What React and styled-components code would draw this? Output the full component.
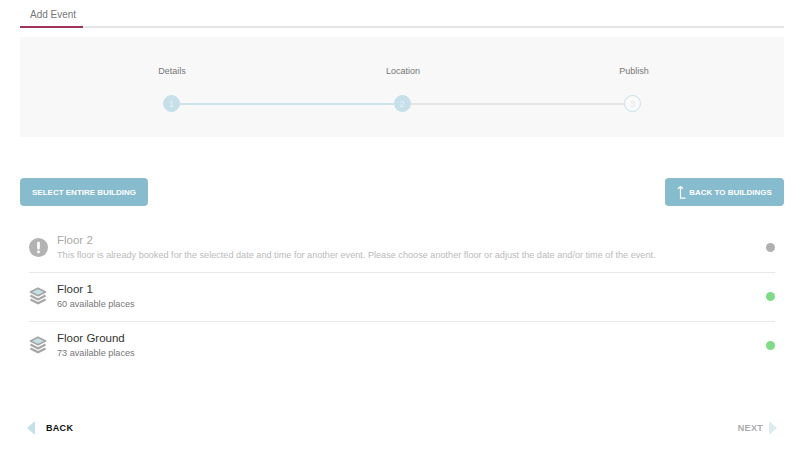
import styled, { createGlobalStyle } from 'styled-components';

const floors = [
  { name: "Floor 2", text: "This floor is already booked for the selected date and time for another event. Please choose another floor or adjust the date and/or time of the event.", booked: true },
  { name: "Floor 1", text: "60 available places" },
  { name: "Floor Ground", text: "73 available places" },
]

const steps = ["Details", "Location", "Publish"]

const LayersIcon = () => (
  <svg width="18" height="18" viewBox="0 0 18 18">
    <path d="M1.5 8.5 L9 12.4 L16.5 8.5" fill="none" stroke="#a6a6a6" strokeWidth="2.2" strokeLinejoin="round" />
    <path d="M1.5 12.4 L9 16.3 L16.5 12.4" fill="none" stroke="#a6a6a6" strokeWidth="2.2" strokeLinejoin="round" />
    <path d="M9 1.2 L16.5 5 L9 8.8 L1.5 5 Z" fill="#c6dfe8" stroke="#a6a6a6" strokeWidth="1.8" strokeLinejoin="round" />
  </svg>
)

const AlertIcon = () => (
  <svg width="19" height="19" viewBox="0 0 20 20">
    <circle cx="10" cy="10" r="10" fill="#b3b3b3" />
    <rect x="8.6" y="4" width="2.8" height="8" rx="1" fill="#fff" />
    <rect x="8.6" y="13.2" width="2.8" height="2.8" rx="1" fill="#fff" />
  </svg>
)

const UpIcon = () => (
  <svg width="9" height="13" viewBox="0 0 9 13">
    <path d="M1 2.8 L3.5 0.5 L6 2.8 M3.5 1 V12.2 H8.5" fill="none" stroke="#fff" strokeWidth="1.2" />
  </svg>
)

function App() {
  return (
    <Page>
      <GlobalStyle />
      <Tabs>
        <Tab>Add Event</Tab>
      </Tabs>
      <Stepper>
        <StepLabels>
          {steps.map((s) => <StepLabel key={s}>{s}</StepLabel>)}
        </StepLabels>
        <Track>
          <Dot $done>1</Dot>
          <Line $done />
          <Dot $done>2</Dot>
          <Line />
          <Dot>3</Dot>
        </Track>
      </Stepper>
      <Actions>
        <Button $width={128}>SELECT ENTIRE BUILDING</Button>
        <Button $width={119}><UpIcon />BACK TO BUILDINGS</Button>
      </Actions>
      <List>
        {floors.map((f) => (
          <Row key={f.name}>
            <IconCell>{f.booked ? <AlertIcon /> : <LayersIcon />}</IconCell>
            <Info>
              <Name $booked={f.booked}>{f.name}</Name>
              <Sub $booked={f.booked}>{f.text}</Sub>
            </Info>
            <Status $booked={f.booked} />
          </Row>
        ))}
      </List>
      <Footer>
        <Nav>
          <ArrowLeft />
          BACK
        </Nav>
        <Nav $disabled>
          NEXT
          <ArrowRight />
        </Nav>
      </Footer>
    </Page>
  );
}

const GlobalStyle = createGlobalStyle`
  html, body {
    margin: 0;
    background: #fff;
    font-family: "Liberation Sans", Arial, sans-serif;
  }
`

const Page = styled.div`
  width: 764px;
  height: 449px;
  margin-left: 20px;
  overflow: hidden;
`

const Tabs = styled.div`
  display: flex;
  height: 26px;
  border-bottom: 2px solid #e6e6e6;
`

const Tab = styled.div`
  width: 53px;
  height: 17px;
  padding: 9px 0 0 10px;
  font-size: 10px;
  line-height: 12px;
  color: #777;
  border-bottom: 2px solid #9e3557;
`

const Stepper = styled.div`
  height: 100px;
  margin-top: 9px;
  padding-top: 28px;
  box-sizing: border-box;
  background: #f8f8f8;
`

const StepLabels = styled.div`
  display: flex;
  justify-content: space-between;
  width: 490px;
  margin-left: 138px;
  font-size: 9px;
  line-height: 12px;
  color: #777;
`

const StepLabel = styled.span`
  width: 28px;
  display: flex;
  justify-content: center;
  white-space: nowrap;
`

const Track = styled.div`
  display: flex;
  align-items: center;
  width: 478px;
  margin: 18px 0 0 143px;
`

const Dot = styled.div`
  flex: none;
  width: 17px;
  height: 17px;
  box-sizing: border-box;
  border-radius: 50%;
  display: flex;
  align-items: center;
  justify-content: center;
  font-size: 9px;
  color: ${(p) => (p.$done ? "#e8f3f7" : "#dfe9ed")};
  background: ${(p) => (p.$done ? "#c6e0ea" : "#fafafa")};
  border: 1px solid #c6e0ea;
`

const Line = styled.div`
  flex: 1;
  height: 2px;
  background: ${(p) => (p.$done ? "#cfe3ec" : "#e6e6e6")};
`

const Actions = styled.div`
  display: flex;
  justify-content: space-between;
  margin-top: 41px;
`

const Button = styled.div`
  width: ${(p) => p.$width}px;
  height: 28px;
  display: flex;
  align-items: center;
  justify-content: center;
  gap: 3px;
  background: #87bbce;
  border-radius: 4px;
  color: #fff;
  font-size: 8px;
  font-weight: bold;
  white-space: nowrap;
`

const List = styled.div`
  margin: 18px 9px 0 9px;
`

const Row = styled.div`
  display: flex;
  align-items: center;
  height: 46px;
  padding-bottom: 2px;
  border-bottom: 1px solid #e8e8e8;

  &:last-child {
    border-bottom: none;
  }
`

const IconCell = styled.div`
  flex: none;
  width: 28px;
  display: flex;
  justify-content: flex-start;
`

const Info = styled.div`
  flex: 1;
`

const Name = styled.div`
  font-size: 11.5px;
  line-height: 15px;
  color: ${(p) => (p.$booked ? "#aaa" : "#333")};
`

const Sub = styled.div`
  margin-top: 1px;
  font-size: 9.15px;
  line-height: 12px;
  color: ${(p) => (p.$booked ? "#bbb" : "#777")};
`

const Status = styled.div`
  flex: none;
  width: 9px;
  height: 9px;
  border-radius: 50%;
  background: ${(p) => (p.$booked ? "#b0b0b0" : "#7edb86")};
`

const Footer = styled.div`
  display: flex;
  justify-content: space-between;
  align-items: center;
  margin: 51px 7px 0 7px;
`

const Nav = styled.div`
  display: flex;
  align-items: center;
  gap: ${(p) => (p.$disabled ? "6px" : "11px")};
  font-size: 9px;
  font-weight: bold;
  letter-spacing: 0.3px;
  color: ${(p) => (p.$disabled ? "#aaa" : "#111")};
`

const ArrowLeft = styled.span`
  width: 0;
  height: 0;
  border-top: 7px solid transparent;
  border-bottom: 7px solid transparent;
  border-right: 8px solid #c6e0ea;
`

const ArrowRight = styled.span`
  width: 0;
  height: 0;
  border-top: 7px solid transparent;
  border-bottom: 7px solid transparent;
  border-left: 8px solid #dcebf1;
`

export default App;
